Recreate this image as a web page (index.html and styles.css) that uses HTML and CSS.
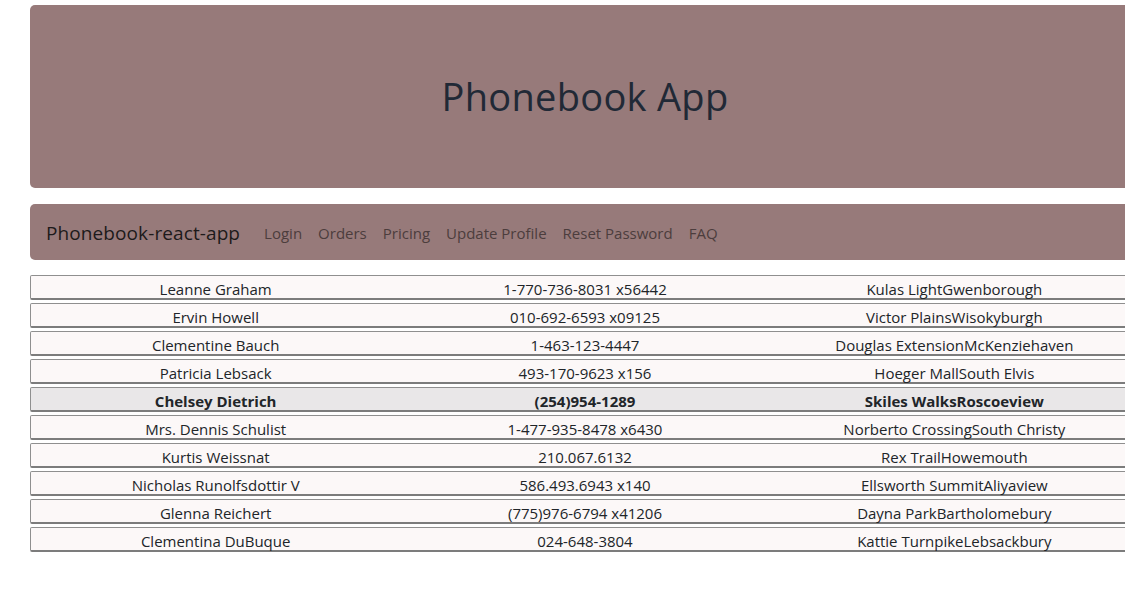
FILE: index.html
```html
<!DOCTYPE html>
<html>
<head>
<meta charset="utf-8">
<link rel="stylesheet" href="styles.css">
</head>
<body>
<div class="container">
  <header class="jumbotron">
    <h1 class="title">Phonebook App</h1>
  </header>
  <nav class="navbar">
    <span class="brand">Phonebook-react-app</span>
    <ul class="nav">
      <li class="nav-link">Login</li>
      <li class="nav-link">Orders</li>
      <li class="nav-link">Pricing</li>
      <li class="nav-link">Update Profile</li>
      <li class="nav-link">Reset Password</li>
      <li class="nav-link">FAQ</li>
    </ul>
  </nav>
  <div class="rows">
    <div class="row"><span>Leanne Graham</span><span>1-770-736-8031 x56442</span><span>Kulas LightGwenborough</span></div>
    <div class="row"><span>Ervin Howell</span><span>010-692-6593 x09125</span><span>Victor PlainsWisokyburgh</span></div>
    <div class="row"><span>Clementine Bauch</span><span>1-463-123-4447</span><span>Douglas ExtensionMcKenziehaven</span></div>
    <div class="row"><span>Patricia Lebsack</span><span>493-170-9623 x156</span><span>Hoeger MallSouth Elvis</span></div>
    <div class="row selected"><span>Chelsey Dietrich</span><span>(254)954-1289</span><span>Skiles WalksRoscoeview</span></div>
    <div class="row"><span>Mrs. Dennis Schulist</span><span>1-477-935-8478 x6430</span><span>Norberto CrossingSouth Christy</span></div>
    <div class="row"><span>Kurtis Weissnat</span><span>210.067.6132</span><span>Rex TrailHowemouth</span></div>
    <div class="row"><span>Nicholas Runolfsdottir V</span><span>586.493.6943 x140</span><span>Ellsworth SummitAliyaview</span></div>
    <div class="row"><span>Glenna Reichert</span><span>(775)976-6794 x41206</span><span>Dayna ParkBartholomebury</span></div>
    <div class="row"><span>Clementina DuBuque</span><span>024-648-3804</span><span>Kattie TurnpikeLebsackbury</span></div>
  </div>
</div>
</body>
</html>
```

FILE: styles.css
```css
html, body {
  margin: 0;
  padding: 0;
  background: #ffffff;
  overflow: hidden;
}
body {
  font-family: "Open Sans", "Noto Sans", sans-serif;
  font-size: 15px;
  color: #212529;
}
.container {
  width: 1110px;
  margin-left: 30px;
  padding-top: 5px;
}
.jumbotron {
  background: #977a7a;
  border-radius: 5px;
  height: 183px;
  display: flex;
  align-items: center;
  justify-content: center;
  margin-bottom: 16px;
}
.title {
  margin: 0;
  font-weight: 400;
  font-size: 38px;
  line-height: 1.2;
  color: #212936;
  letter-spacing: 0.3px;
}
.navbar {
  background: #977a7a;
  border-radius: 5px;
  height: 56px;
  box-sizing: border-box;
  display: flex;
  align-items: center;
  padding: 2px 16px 0;
  margin-bottom: 16px;
}
.brand {
  font-size: 19px;
  letter-spacing: 0.1px;
  color: #1d1a1a;
  margin-right: 16px;
}
.nav {
  list-style: none;
  margin: 0;
  padding: 0;
  display: flex;
}
.nav-link {
  padding: 0 8px;
  color: #4c3d3d;
  font-size: 15px;
}
.rows {
  display: flex;
  flex-direction: column;
  gap: 3px;
  margin-top: -1px;
}
.row {
  display: grid;
  grid-template-columns: 1fr 1fr 1fr;
  height: 25px;
  box-sizing: border-box;
  border: 1px solid #8f8f8f;
  border-bottom: 2px solid #7c7c7c;
  border-radius: 2px 0 0 2px;
  background: #fcf8f8;
  align-items: center;
  text-align: center;
  line-height: 22px;
  padding-top: 2px;
}
.row.selected {
  background: #e9e7e8;
  font-weight: 700;
}
```
